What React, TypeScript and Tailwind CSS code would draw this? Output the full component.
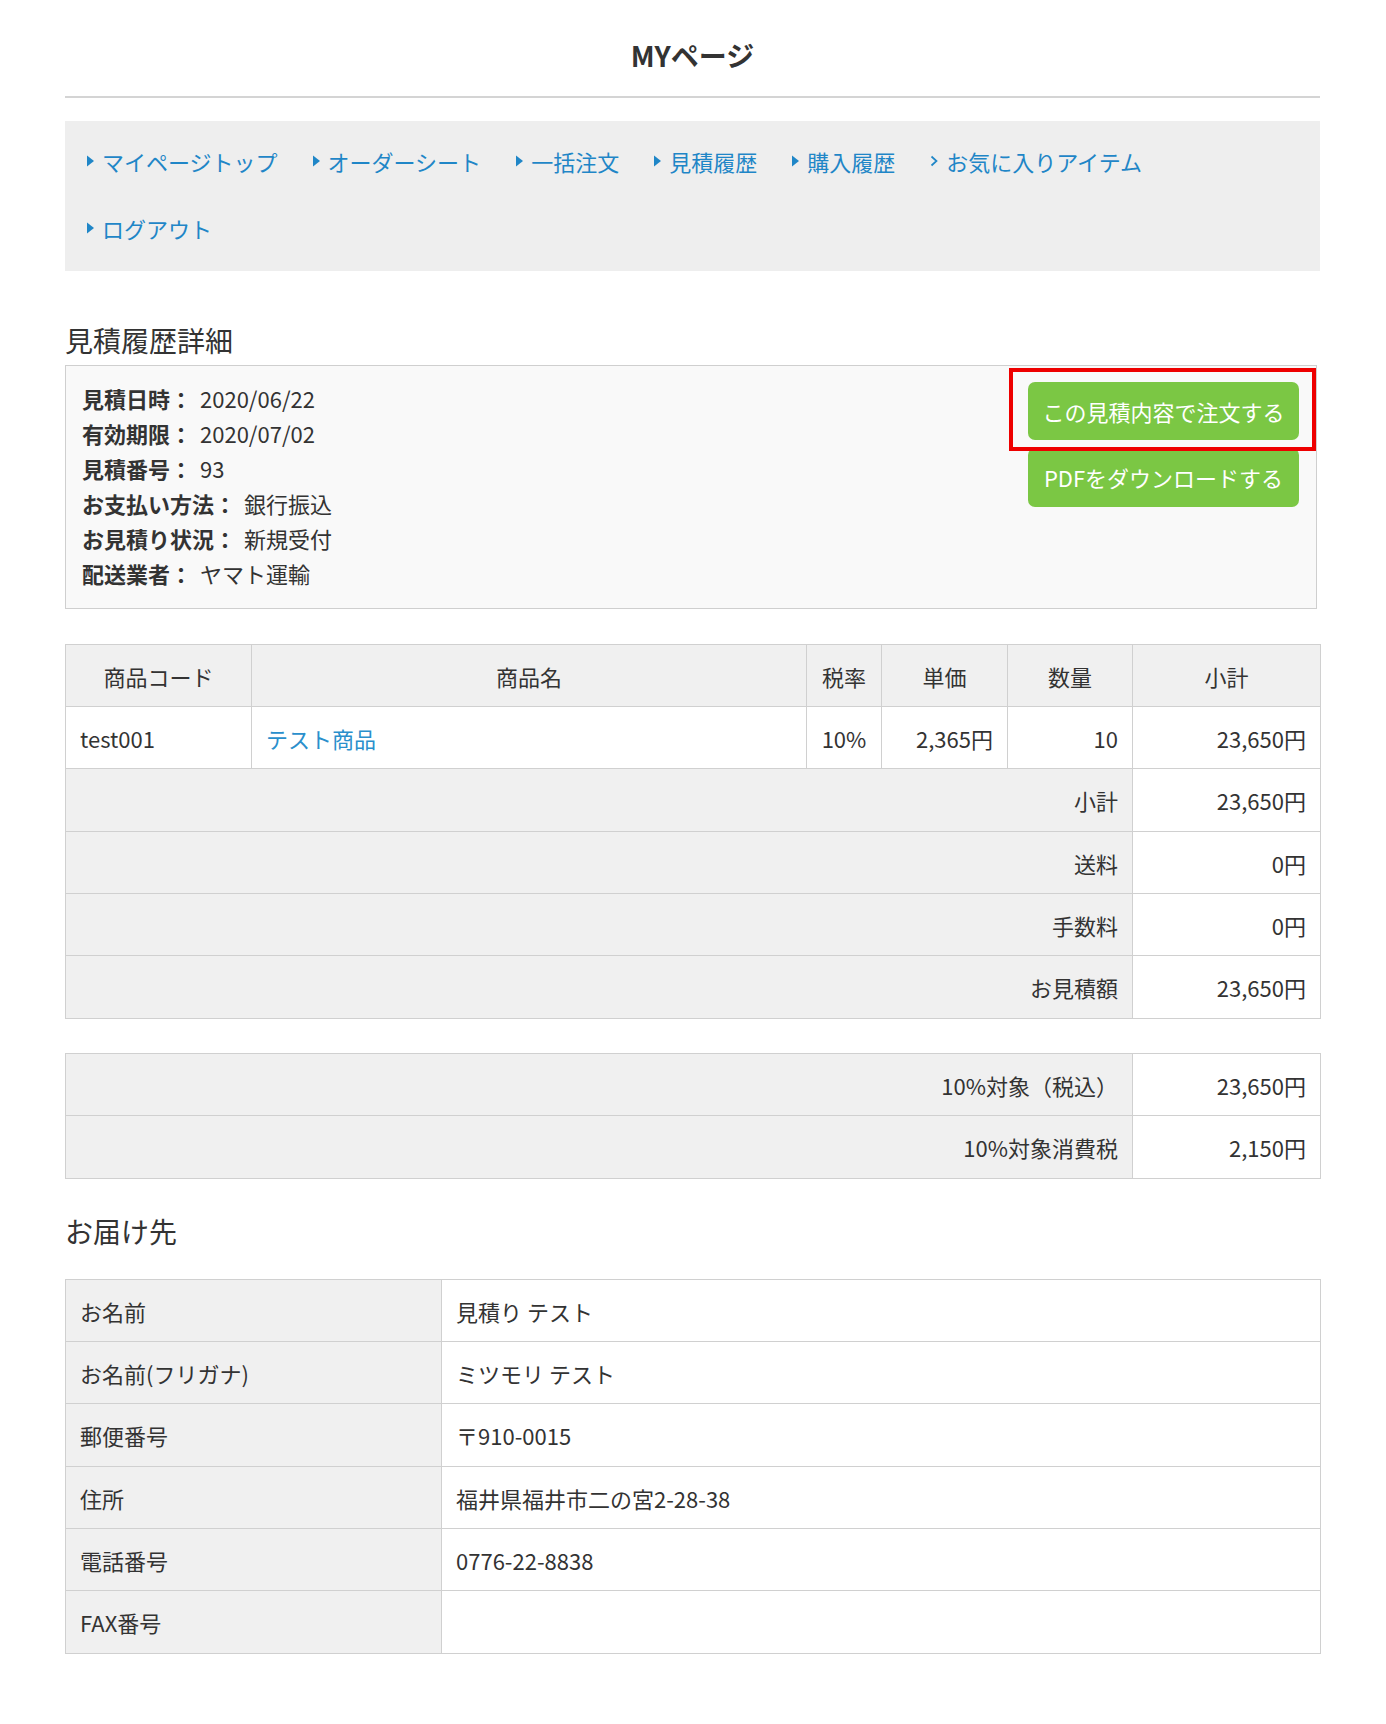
import React from 'react';

const FONT = { fontFamily: '"Noto Sans CJK JP", "Liberation Sans", sans-serif' };

type NavItem = { label: string; chevron?: boolean };

const navRows: NavItem[][] = [
    [
        { label: 'マイページトップ' },
        { label: 'オーダーシート' },
        { label: '一括注文' },
        { label: '見積履歴' },
        { label: '購入履歴' },
        { label: 'お気に入りアイテム', chevron: true },
    ],
    [{ label: 'ログアウト' }],
];

const infoRows = [
    ['見積日時：', '2020/06/22'],
    ['有効期限：', '2020/07/02'],
    ['見積番号：', '93'],
    ['お支払い方法：', '銀行振込'],
    ['お見積り状況：', '新規受付'],
    ['配送業者：', 'ヤマト運輸'],
];

const summaryRows = [
    ['小計', '23,650円'],
    ['送料', '0円'],
    ['手数料', '0円'],
    ['お見積額', '23,650円'],
];

const taxRows = [
    ['10%対象（税込）', '23,650円'],
    ['10%対象消費税', '2,150円'],
];

const deliveryRows = [
    ['お名前', '見積り テスト'],
    ['お名前(フリガナ)', 'ミツモリ テスト'],
    ['郵便番号', '〒910-0015'],
    ['住所', '福井県福井市二の宮2-28-38'],
    ['電話番号', '0776-22-8838'],
    ['FAX番号', ''],
];

const NavLink: React.FC<NavItem> = ({ label, chevron }) => (
    <a href="#" className="flex items-center gap-[8px] text-[#1f86c7] text-[22px] leading-[32px] whitespace-nowrap">
        {chevron ? (
            <svg width="8" height="12" viewBox="0 0 8 12" className="shrink-0">
                <polyline points="1.5,1.5 6.5,6 1.5,10.5" fill="none" stroke="#1f86c7" strokeWidth="1.7" />
            </svg>
        ) : (
            <svg width="7" height="12" viewBox="0 0 7 12" className="shrink-0">
                <polygon points="0,0.5 7,6 0,11.5" fill="#1f86c7" />
            </svg>
        )}
        <span>{label}</span>
    </a>
);

const cell = 'border border-[#d0d0d0] px-[14px] text-[22px] leading-[30px]';
// rows are ~62.3px apart in the reference: mostly 62, every third 63
const rowH = (i: number) => (i % 3 === 2 ? 'h-[63px]' : 'h-[62px]');

export default function App() {
    return (
        <div className="min-h-[1724px] bg-white text-[#333333]" style={FONT}>
            <div className="w-[1255px] ml-[65px] pt-[35px] pb-[70px]">
                {/* Page title */}
                <h1 className="text-center text-[28px] leading-[40px] font-bold">MYページ</h1>
                <div className="mt-[21px] h-[2px] bg-[#d4d4d4]" />

                {/* Nav */}
                <nav className="mt-[23px] bg-[#eeeeee] pl-[22px] pr-[22px] pt-[24px] pb-[27px] flex flex-col gap-y-[35px]">
                    {navRows.map((row, i) => (
                        <div key={i} className="flex items-center gap-x-[35px]">
                            {row.map(item => (
                                <NavLink key={item.label} {...item} />
                            ))}
                        </div>
                    ))}
                </nav>

                {/* Estimate detail */}
                <h2 className="mt-[49px] text-[28px] leading-[40px] font-normal">見積履歴詳細</h2>
                <div className="mt-[5px] mr-[3px] border border-[#cfcfcf] bg-[#f9f9f9] flex justify-between pl-[16px] pr-[17px] pt-[15px] pb-[17px]">
                    <div>
                        {infoRows.map(([label, value]) => (
                            <div key={label} className="flex text-[22px] leading-[35px]">
                                <span className="font-bold">{label}</span>
                                <span className="pl-[8px]">{value}</span>
                            </div>
                        ))}
                    </div>
                    <div className="relative flex flex-col gap-[8px] pt-[1px]">
                        <button className="w-[271px] h-[58px] rounded-[7px] bg-[#7bc744] text-white text-[22px] font-normal">
                            この見積内容で注文する
                        </button>
                        <button className="w-[271px] h-[59px] rounded-[7px] bg-[#7bc744] text-white text-[22px] font-normal">
                            PDFをダウンロードする
                        </button>
                        <div className="absolute left-[-19px] top-[-13px] w-[307px] h-[83px] border-4 border-[#ee0000] pointer-events-none" />
                    </div>
                </div>

                {/* Items table */}
                <table className="mt-[35px] w-full table-fixed border-collapse">
                    <colgroup>
                        <col className="w-[186px]" />
                        <col className="w-[555px]" />
                        <col className="w-[75px]" />
                        <col className="w-[126px]" />
                        <col className="w-[125px]" />
                        <col className="w-[188px]" />
                    </colgroup>
                    <thead>
                        <tr className="bg-[#f0f0f0]">
                            {['商品コード', '商品名', '税率', '単価', '数量', '小計'].map(h => (
                                <th key={h} className={`${cell} ${rowH(0)} font-normal text-center px-[4px]`}>{h}</th>
                            ))}
                        </tr>
                    </thead>
                    <tbody>
                        <tr className="bg-white">
                            <td className={`${cell} ${rowH(1)} px-[12px]`}>test001</td>
                            <td className={`${cell} ${rowH(1)} px-[12px]`}>
                                <a href="#" className="text-[#2a8fcc]">テスト商品</a>
                            </td>
                            <td className={`${cell} ${rowH(1)} text-center px-[4px]`}>10%</td>
                            <td className={`${cell} ${rowH(1)} text-right`}>2,365円</td>
                            <td className={`${cell} ${rowH(1)} text-right`}>10</td>
                            <td className={`${cell} ${rowH(1)} text-right`}>23,650円</td>
                        </tr>
                        {summaryRows.map(([label, value], i) => (
                            <tr key={label}>
                                <td colSpan={5} className={`${cell} ${rowH(i + 2)} bg-[#f0f0f0] text-right`}>{label}</td>
                                <td className={`${cell} ${rowH(i + 2)} bg-white text-right`}>{value}</td>
                            </tr>
                        ))}
                    </tbody>
                </table>

                {/* Tax table */}
                <table className="mt-[34px] w-full table-fixed border-collapse">
                    <colgroup>
                        <col className="w-[1067px]" />
                        <col className="w-[188px]" />
                    </colgroup>
                    <tbody>
                        {taxRows.map(([label, value], i) => (
                            <tr key={label}>
                                <td className={`${cell} ${rowH(i + 1)} bg-[#f0f0f0] text-right`}>{label}</td>
                                <td className={`${cell} ${rowH(i + 1)} bg-white text-right`}>{value}</td>
                            </tr>
                        ))}
                    </tbody>
                </table>

                {/* Delivery */}
                <h2 className="mt-[32px] text-[28px] leading-[40px] font-normal">お届け先</h2>
                <table className="mt-[28px] w-full table-fixed border-collapse">
                    <colgroup>
                        <col className="w-[376px]" />
                        <col className="w-[879px]" />
                    </colgroup>
                    <tbody>
                        {deliveryRows.map(([label, value], i) => (
                            <tr key={label}>
                                <td className={`${cell} ${rowH(i)} bg-[#f0f0f0] px-[12px]`}>{label}</td>
                                <td className={`${cell} ${rowH(i)} bg-white px-[12px]`}>{value}</td>
                            </tr>
                        ))}
                    </tbody>
                </table>
            </div>
        </div>
    );
}
